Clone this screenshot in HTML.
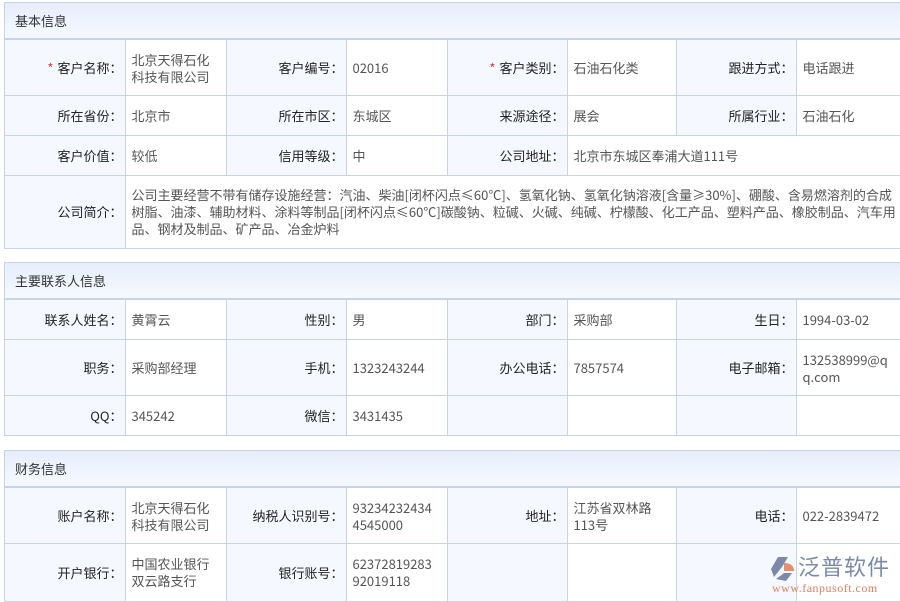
<!DOCTYPE html>
<html><head><meta charset="utf-8"><style>
*{margin:0;padding:0;box-sizing:border-box}
body{width:900px;height:600px;overflow:hidden;background:#fff;font-family:"Noto Sans CJK SC","Liberation Sans",sans-serif;font-size:13px;color:#555;position:relative}
.sec{position:absolute;left:4px;width:900px;border:1px solid #c9d3e6;border-right:none}
.hd{height:36px;line-height:35px;padding-left:10px;color:#333;background:linear-gradient(#e6eefb,#f6f9ff);border-bottom:1px solid #c9d3e6}
table{border-collapse:collapse;table-layout:fixed;width:896px}
td{border:1px solid #c9d3e6;padding:0 6px;line-height:17px;vertical-align:middle;word-break:break-all}
tr td:first-child{border-left:none}
tr:last-child td{border-bottom:none}
td.l{background:#f5f9ff;color:#222;text-align:right;padding-right:2px}
td.v{background:#fff;color:#555}
.r{color:#e33;margin-right:4px}
.logo{position:absolute;left:770px;top:553px;width:125px;height:45px}
</style></head><body>

<div class="sec" style="top:2px">
<div class="hd">基本信息</div>
<table>
<colgroup><col style="width:120px"><col style="width:101px"><col style="width:120px"><col style="width:101px"><col style="width:120px"><col style="width:109px"><col style="width:120px"><col style="width:105px"></colgroup>
<tr style="height:56px"><td class="l"><span class="r">*</span>客户名称：</td><td class="v">北京天得石化科技有限公司</td><td class="l">客户编号：</td><td class="v">02016</td><td class="l"><span class="r">*</span>客户类别：</td><td class="v">石油石化类</td><td class="l">跟进方式：</td><td class="v">电话跟进</td></tr>
<tr style="height:40px"><td class="l">所在省份：</td><td class="v">北京市</td><td class="l">所在市区：</td><td class="v">东城区</td><td class="l">来源途径：</td><td class="v">展会</td><td class="l">所属行业：</td><td class="v">石油石化</td></tr>
<tr style="height:40px"><td class="l">客户价值：</td><td class="v">较低</td><td class="l">信用等级：</td><td class="v">中</td><td class="l">公司地址：</td><td class="v" colspan="3">北京市东城区奉浦大道111号</td></tr>
<tr style="height:72px"><td class="l">公司简介：</td><td class="v" colspan="7" style="padding-right:4px">公司主要经营不带有储存设施经营：汽油、柴油[闭杯闪点≤60℃]、氢氧化钠、氢氧化钠溶液[含量≥30%]、硼酸、含易燃溶剂的合成树脂、油漆、辅助材料、涂料等制品[闭杯闪点≤60℃]碳酸钠、粒碱、火碱、纯碱、柠檬酸、化工产品、塑料产品、橡胶制品、汽车用品、钢材及制品、矿产品、冶金炉料</td></tr>
</table></div>

<div class="sec" style="top:262px">
<div class="hd">主要联系人信息</div>
<table>
<colgroup><col style="width:120px"><col style="width:101px"><col style="width:120px"><col style="width:101px"><col style="width:120px"><col style="width:109px"><col style="width:120px"><col style="width:105px"></colgroup>
<tr style="height:40px"><td class="l">联系人姓名：</td><td class="v">黄霄云</td><td class="l">性别：</td><td class="v">男</td><td class="l">部门：</td><td class="v">采购部</td><td class="l">生日：</td><td class="v">1994-03-02</td></tr>
<tr style="height:56px"><td class="l">职务：</td><td class="v">采购部经理</td><td class="l">手机：</td><td class="v">1323243244</td><td class="l">办公电话：</td><td class="v">7857574</td><td class="l">电子邮箱：</td><td class="v">132538999@qq.com</td></tr>
<tr style="height:39px"><td class="l">QQ：</td><td class="v">345242</td><td class="l">微信：</td><td class="v">3431435</td><td class="l"></td><td class="v"></td><td class="l"></td><td class="v"></td></tr>
</table></div>

<div class="sec" style="top:450px">
<div class="hd">财务信息</div>
<table>
<colgroup><col style="width:120px"><col style="width:101px"><col style="width:120px"><col style="width:101px"><col style="width:120px"><col style="width:109px"><col style="width:120px"><col style="width:105px"></colgroup>
<tr style="height:56px"><td class="l">账户名称：</td><td class="v">北京天得石化科技有限公司</td><td class="l">纳税人识别号：</td><td class="v">93234232434<br>4545000</td><td class="l">地址：</td><td class="v">江苏省双林路<br>113号</td><td class="l">电话：</td><td class="v">022-2839472</td></tr>
<tr style="height:57px"><td class="l">开户银行：</td><td class="v">中国农业银行双云路支行</td><td class="l">银行账号：</td><td class="v">62372819283<br>92019118</td><td class="l"></td><td class="v"></td><td class="l"></td><td class="v"></td></tr>
</table></div>

<div class="logo">
<svg width="26" height="28" viewBox="0 0 26 28" style="position:absolute;left:0;top:2px">
<path d="M8 2 L18 2 L12 12 L4 22 L1 14 Z" fill="#7b8aa8"/>
<path d="M14 8 Q24 8 24 16 L14 16 Z" fill="#e0906e"/>
<path d="M6 24 L14 18 L22 18 L16 26 Z" fill="#7b8aa8"/>
</svg>
<div style="position:absolute;left:28px;top:0;font-size:22px;line-height:26px;color:#7b8aa8;font-family:'Noto Sans CJK SC',sans-serif;letter-spacing:1px">泛普软件</div>
<div style="position:absolute;left:2px;top:28px;font-size:12px;line-height:14px;color:#d9805f;font-family:'Liberation Serif',serif;letter-spacing:0.5px">www.fanpusoft.com</div>
</div>
</body></html>
